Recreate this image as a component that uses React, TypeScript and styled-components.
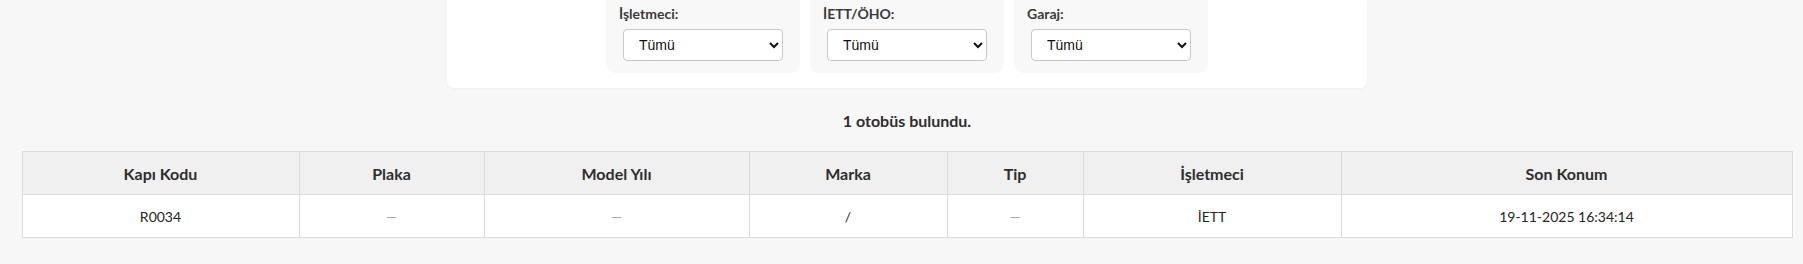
import React from "react";
import styled, { createGlobalStyle } from "styled-components";

const GlobalStyle = createGlobalStyle`
  html, body {
    margin: 0;
    padding: 0;
    background: #f7f7f7;
    font-family: Lato, "Noto Sans", sans-serif;
    color: #333;
  }
`;

const Page = styled.div`
  width: 1770px;
  margin-left: 22px;
  display: flex;
  flex-direction: column;
  align-items: center;
`;

const FilterCard = styled.section`
  width: 920px;
  box-sizing: border-box;
  background: #fff;
  border-radius: 0 0 7px 7px;
  box-shadow: 0 1px 3px rgba(0, 0, 0, 0.04);
  padding: 0 0 15px;
  display: flex;
  justify-content: center;
  gap: 10px;
`;

const FilterGroup = styled.div`
  width: 194px;
  box-sizing: border-box;
  background: #f8f8f8;
  border-radius: 0 0 9px 9px;
  padding: 5px 0 12px;
  display: flex;
  flex-direction: column;
`;

const FilterLabel = styled.label`
  font-size: 14px;
  font-weight: 700;
  color: #3a3a3a;
  line-height: 18px;
  margin: 0 0 6px 13px;
`;

const Select = styled.select`
  align-self: center;
  width: 160px;
  height: 32px;
  box-sizing: border-box;
  padding: 0 8px 0 11px;
  border: 1px solid #c8c8c8;
  border-radius: 4px;
  background: #fff;
  font-family: "Liberation Sans", Arial, sans-serif;
  font-size: 14px;
  color: #111;
`;

const ResultCount = styled.p`
  margin: 23px 0 20px;
  font-size: 16px;
  font-weight: 700;
  line-height: 20px;
  color: #2e2e2e;
  text-align: center;
`;

const Table = styled.table`
  width: 1770px;
  table-layout: fixed;
  border-collapse: collapse;
  background: #fff;
`;

const HeadCell = styled.th`
  height: 42px;
  padding: 0 10px;
  background: #f0f0f0;
  border: 1px solid #dcdcdc;
  font-size: 16px;
  font-weight: 700;
  color: #2e2e2e;
  text-align: center;
`;

const Cell = styled.td<{ $muted?: boolean }>`
  height: 42px;
  padding: 0 10px;
  border: 1px solid #dcdcdc;
  font-size: 14px;
  color: ${(p) => (p.$muted ? "#aaa" : "#262626")};
  text-align: center;
`;

const filters = [
  { id: "operator", label: "İşletmeci:" },
  { id: "iett", label: "İETT/ÖHO:" },
  { id: "garage", label: "Garaj:" },
];

const columns = [
  { title: "Kapı Kodu", width: 277 },
  { title: "Plaka", width: 185 },
  { title: "Model Yılı", width: 265 },
  { title: "Marka", width: 198 },
  { title: "Tip", width: 136 },
  { title: "İşletmeci", width: 258 },
  { title: "Son Konum", width: 451 },
];

const buses = [
  {
    door: "R0034",
    plate: null,
    year: null,
    brand: "/",
    type: null,
    operator: "İETT",
    lastSeen: "19-11-2025 16:34:14",
  },
];

const show = (v: string | null) =>
  v === null ? <Cell $muted>—</Cell> : <Cell>{v}</Cell>;

export default function App() {
  return (
    <>
      <GlobalStyle />
      <Page>
        <FilterCard>
          {filters.map((f) => (
            <FilterGroup key={f.id}>
              <FilterLabel htmlFor={f.id}>{f.label}</FilterLabel>
              <Select id={f.id} defaultValue="all">
                <option value="all">Tümü</option>
              </Select>
            </FilterGroup>
          ))}
        </FilterCard>
        <ResultCount>{buses.length} otobüs bulundu.</ResultCount>
        <Table>
          <colgroup>
            {columns.map((c) => (
              <col key={c.title} style={{ width: c.width }} />
            ))}
          </colgroup>
          <thead>
            <tr>
              {columns.map((c) => (
                <HeadCell key={c.title}>{c.title}</HeadCell>
              ))}
            </tr>
          </thead>
          <tbody>
            {buses.map((b) => (
              <tr key={b.door}>
                {show(b.door)}
                {show(b.plate)}
                {show(b.year)}
                {show(b.brand)}
                {show(b.type)}
                {show(b.operator)}
                {show(b.lastSeen)}
              </tr>
            ))}
          </tbody>
        </Table>
      </Page>
    </>
  );
}
